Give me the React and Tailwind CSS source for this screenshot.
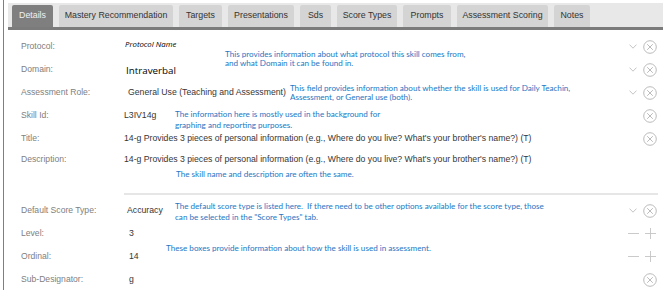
import React from 'react';

const tabs = [
  { label: 'Details', w: 'w-[41px]', active: true },
  { label: 'Mastery Recommendation', w: 'w-[114px]' },
  { label: 'Targets', w: 'w-[43px]' },
  { label: 'Presentations', w: 'w-[66px]' },
  { label: 'Sds', w: 'w-[31px]' },
  { label: 'Score Types', w: 'w-[60px]' },
  { label: 'Prompts', w: 'w-[48px]' },
  { label: 'Assessment Scoring', w: 'w-[91px]' },
  { label: 'Notes', w: 'w-[36px]' },
];

const arial = 'font-["Liberation_Sans",Arial,sans-serif]';
const note = 'font-["Lato","Open_Sans",sans-serif] text-[8.1px] text-[#2477c4] whitespace-nowrap';

const Chevron = () => (
  <svg width="8" height="5" viewBox="0 0 8 5" fill="none">
    <path d="M0.5 0.6 L4 4.2 L7.5 0.6" stroke="#bdbdbd" strokeWidth="0.9" />
  </svg>
);

const CircleX = () => (
  <svg width="14" height="14" viewBox="0 0 14 14" fill="none">
    <circle cx="7" cy="7" r="6.3" stroke="#b3b3b3" strokeWidth="0.9" />
    <path d="M4.2 4.2 L9.8 9.8 M9.8 4.2 L4.2 9.8" stroke="#b3b3b3" strokeWidth="0.9" />
  </svg>
);

const Minus = () => (
  <svg width="11" height="11" viewBox="0 0 11 11" fill="none">
    <path d="M0 5.5 H11" stroke="#c4c4c4" strokeWidth="0.9" />
  </svg>
);

const Plus = () => (
  <svg width="11" height="11" viewBox="0 0 11 11" fill="none">
    <path d="M0 5.5 H11 M5.5 0 V11" stroke="#c4c4c4" strokeWidth="0.9" />
  </svg>
);

const Icons = ({ kind }) => {
  if (!kind) return null;
  return (
    <div className="ml-auto flex items-center gap-[4px] pr-[6px]">
      <div className="w-[12px] flex justify-center">
        {kind === 'select' && <Chevron />}
        {kind === 'number' && <Minus />}
      </div>
      <div className="w-[14px] flex justify-center">
        {kind === 'number' ? <Plus /> : <CircleX />}
      </div>
    </div>
  );
};

const Row = ({ label, children, icons, h = 'h-[23px]', extra }) => (
  <div className={`relative flex items-center ${h}`}>
    <div className={`w-[116px] shrink-0 pl-[13px] text-[8.6px] text-[#808080] ${arial}`}>{label}</div>
    <div className="flex items-center">{children}</div>
    <Icons kind={icons} />
    {extra}
  </div>
);

const Value = ({ children, className = '' }) => (
  <span className={`text-[8.7px] text-[#363636] whitespace-nowrap ${arial} ${className}`}>{children}</span>
);

export default function App() {
  return (
    <div className="w-[669px] h-[303px] bg-white pl-[3px] overflow-hidden">
      <div className="h-[290px] border-l border-[#6f877e] pl-[4px] pr-[6px] pt-[3px]">
        <div className="h-[24px] bg-[#e8e8e8] pl-[4px] flex items-end gap-[6px]">
          {tabs.map((t) => (
            <div
              key={t.label}
              className={`${t.w} h-[22px] rounded-t-[2px] flex items-center justify-center text-[8.8px] whitespace-nowrap ${arial} ${
                t.active ? 'bg-[#7f7f7f] text-[#f0f0f0]' : 'bg-[#d4d4d4] text-[#333333]'
              }`}
            >
              {t.label}
            </div>
          ))}
        </div>
        <div className="h-[3px] bg-[#7b7b7b]" />

        <div className="pt-[5px]">
          <Row
            label="Protocol:"
            icons="select"
            extra={
              <div className={`absolute left-[217px] top-[15px] leading-[9px] ${note}`}>
                <p>This provides information about what protocol this skill comes from,</p>
                <p>and what Domain it can be found in.</p>
              </div>
            }
          >
            <span className='italic text-[7.8px] text-black font-["Open_Sans",sans-serif] pl-[1px] -mt-[3px]'>Protocol Name</span>
          </Row>
          <Row label="Domain:" icons="select">
            <span className='text-[9.8px] text-black font-["Open_Sans",sans-serif] pl-[2px] pt-[3px]'>Intraverbal</span>
          </Row>
          <Row label="Assessment Role:" icons="select">
            <Value className="pl-[4px]">General Use (Teaching and Assessment)</Value>
            <div className={`ml-[4px] leading-[9px] ${note}`}>
              <p>This field provides information about whether the skill is used for Daily Teachin,</p>
              <p>Assessment, or General use (both).</p>
            </div>
          </Row>
          <Row
            label="Skill Id:"
            icons="clear"
            extra={
              <div className={`absolute left-[167px] top-[5px] leading-[11px] ${note}`}>
                <p>The information here is mostly used in the background for</p>
                <p>graphing and reporting purposes.</p>
              </div>
            }
          >
            <Value>L3IV14g</Value>
          </Row>
          <Row label="Title:" icons="clear">
            <Value>14-g Provides 3 pieces of personal information (e.g., Where do you live? What's your brother's name?) (T)</Value>
          </Row>
          <Row label="Description:" h="h-[19px]">
            <Value>14-g Provides 3 pieces of personal information (e.g., Where do you live? What's your brother's name?) (T)</Value>
          </Row>
          <div className={`h-[10px] pl-[168px] leading-[10px] ${note}`}>
            The skill name and description are often the same.
          </div>

          <div className="mt-[14px] ml-[116px] mr-[5px] h-[2px] bg-[#e6e6e6]" />

          <div className="pt-[4px]">
            <Row
              label="Default Score Type:"
              icons="select"
              extra={
                <div className={`absolute left-[167px] top-[2px] leading-[11px] ${note}`}>
                  <p>The default score type is listed here.&nbsp; If there need to be other options available for the score type, those</p>
                  <p>can be selected in the "Score Types" tab.</p>
                </div>
              }
            >
              <Value className="pl-[3px]">Accuracy</Value>
            </Row>
            <Row
              label="Level:"
              icons="number"
              extra={
                <div className={`absolute left-[158px] top-[21px] leading-[10px] ${note}`}>
                  These boxes provide information about how the skill is used in assessment.
                </div>
              }
            >
              <Value className="pl-[5px]">3</Value>
            </Row>
            <Row label="Ordinal:" icons="number">
              <Value className="pl-[5px]">14</Value>
            </Row>
            <Row label="Sub-Designator:" icons="clear">
              <Value className="pl-[5px]">g</Value>
            </Row>
          </div>
        </div>
      </div>
    </div>
  );
}
